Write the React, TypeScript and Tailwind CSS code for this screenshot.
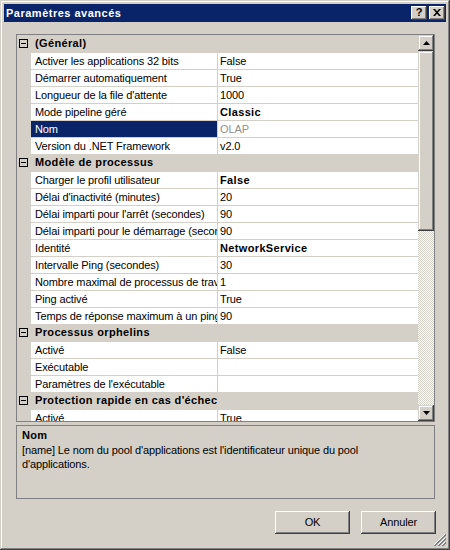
import React from "react";

type Row =
  | { kind: "cat"; label: string }
  | { kind: "prop"; name: string; value: string; bold?: boolean; selected?: boolean };

const rows: Row[] = [
  { kind: "cat", label: "(Général)" },
  { kind: "prop", name: "Activer les applications 32 bits", value: "False" },
  { kind: "prop", name: "Démarrer automatiquement", value: "True" },
  { kind: "prop", name: "Longueur de la file d'attente", value: "1000" },
  { kind: "prop", name: "Mode pipeline géré", value: "Classic", bold: true },
  { kind: "prop", name: "Nom", value: "OLAP", selected: true },
  { kind: "prop", name: "Version du .NET Framework", value: "v2.0" },
  { kind: "cat", label: "Modèle de processus" },
  { kind: "prop", name: "Charger le profil utilisateur", value: "False", bold: true },
  { kind: "prop", name: "Délai d'inactivité (minutes)", value: "20" },
  { kind: "prop", name: "Délai imparti pour l'arrêt (secondes)", value: "90" },
  { kind: "prop", name: "Délai imparti pour le démarrage (secondes)", value: "90" },
  { kind: "prop", name: "Identité", value: "NetworkService", bold: true },
  { kind: "prop", name: "Intervalle Ping (secondes)", value: "30" },
  { kind: "prop", name: "Nombre maximal de processus de travail", value: "1" },
  { kind: "prop", name: "Ping activé", value: "True" },
  { kind: "prop", name: "Temps de réponse maximum à un ping (secondes)", value: "90" },
  { kind: "cat", label: "Processus orphelins" },
  { kind: "prop", name: "Activé", value: "False" },
  { kind: "prop", name: "Exécutable", value: "" },
  { kind: "prop", name: "Paramètres de l'exécutable", value: "" },
  { kind: "cat", label: "Protection rapide en cas d'échec" },
  { kind: "prop", name: "Activé", value: "True" },
];

function MinusBox() {
  return (
    <div className="w-[9px] h-[9px] border border-[#000] flex items-center justify-center">
      <div className="w-[5px] h-px bg-black" />
    </div>
  );
}

function GridRow({ row }: { row: Row }) {
  if (row.kind === "cat") {
    return (
      <div className="flex h-[17px] bg-[#d4d0c8] shrink-0">
        <div className="w-[14px] h-[17px] flex items-center pl-[2px] shrink-0">
          <MinusBox />
        </div>
        <div className="pl-[4px] h-[17px] leading-[17px] font-bold tracking-[0.35px] whitespace-nowrap text-black">
          {row.label}
        </div>
      </div>
    );
  }
  return (
    <div className="flex h-[17px] bg-[#d4d0c8] shrink-0 pt-px">
      <div className="w-[14px] shrink-0" />
      <div
        className={
          row.selected
            ? "w-[186px] h-[16px] shrink-0 bg-[#0a246a] text-white pl-[4px] leading-[16px] whitespace-nowrap overflow-hidden"
            : "w-[186px] h-[16px] shrink-0 bg-white text-black pl-[4px] leading-[16px] whitespace-nowrap overflow-hidden"
        }
      >
        {row.name}
      </div>
      <div className="w-px shrink-0" />
      <div
        className={
          row.selected
            ? "w-[200px] h-[16px] shrink-0 bg-white text-[#8f8f8f] pl-[2px] leading-[16px] whitespace-nowrap overflow-hidden"
            : row.bold
            ? "w-[200px] h-[16px] shrink-0 bg-white text-black font-bold tracking-[0.35px] pl-[2px] leading-[16px] whitespace-nowrap overflow-hidden"
            : "w-[200px] h-[16px] shrink-0 bg-white text-black pl-[2px] leading-[16px] whitespace-nowrap overflow-hidden"
        }
      >
        {row.value}
      </div>
    </div>
  );
}

function Arrow({ up }: { up: boolean }) {
  return (
    <svg width="7" height="4" viewBox="0 0 7 4">
      {up ? <path d="M3.5 0 L7 4 L0 4 Z" fill="#000" /> : <path d="M0 0 L7 0 L3.5 4 Z" fill="#000" />}
    </svg>
  );
}

const raisedSb =
  "bg-[#d4d0c8] shadow-[inset_-1px_-1px_0_#404040,inset_1px_1px_0_#d4d0c8,inset_-2px_-2px_0_#808080,inset_2px_2px_0_#ffffff]";
const raisedBtn =
  "bg-[#d4d0c8] shadow-[inset_-1px_-1px_0_#404040,inset_1px_1px_0_#ffffff,inset_-2px_-2px_0_#808080,inset_2px_2px_0_#d4d0c8]";

function ScrollBar() {
  return (
    <div className="w-[16px] h-[386px] flex flex-col shrink-0">
      <div className={`h-[16px] flex items-center justify-center shrink-0 ${raisedSb}`}>
        <Arrow up />
      </div>
      <div className={`h-[180px] shrink-0 ${raisedSb}`} />
      <div className="flex-1 bg-[repeating-conic-gradient(#d4d0c8_0_25%,#ffffff_0_50%)] bg-[length:2px_2px]" />
      <div className={`h-[16px] flex items-center justify-center shrink-0 ${raisedSb}`}>
        <Arrow up={false} />
      </div>
    </div>
  );
}

function TitleButton({ children }: { children: React.ReactNode }) {
  return (
    <div className={`w-[16px] h-[14px] flex items-center justify-center ${raisedBtn}`}>{children}</div>
  );
}

export default function App() {
  return (
    <div className="w-[450px] h-[550px] relative bg-[#d4d0c8] font-['Liberation_Sans',Arial,sans-serif] text-[11px] tracking-[-0.12px] text-black shadow-[inset_-1px_-1px_0_#404040,inset_1px_1px_0_#d4d0c8,inset_-2px_-2px_0_#808080,inset_2px_2px_0_#ffffff] p-[4px] flex flex-col">
      {/* Title bar */}
      <div className="h-[18px] bg-[#0a246a] flex items-center shrink-0 pl-[2px] pr-[1px]">
        <div className="flex-1 text-white font-bold text-[11px] tracking-[0.5px] leading-[18px] whitespace-nowrap">
          Paramètres avancés
        </div>
        <div className="flex gap-[2px] mb-[1px]">
          <TitleButton>
            <span className="font-bold text-[11px] leading-[11px] text-black">?</span>
          </TitleButton>
          <TitleButton>
            <svg width="8" height="7" viewBox="0 0 8 7">
              <path d="M0 0h2l2 2.2L6 0h2L5 3.5 8 7H6L4 4.8 2 7H0l3-3.5z" fill="#000" />
            </svg>
          </TitleButton>
        </div>
      </div>

      {/* Body */}
      <div className="flex-1 flex flex-col pl-[12px] pr-[11px] pt-[12px]">
        <div className="h-[388px] border border-[#808080] flex shrink-0">
          <div className="w-[401px] h-[386px] overflow-hidden flex flex-col">
            {rows.map((r, i) => (
              <GridRow key={i} row={r} />
            ))}
          </div>
          <ScrollBar />
        </div>

        <div className="mt-[3px] h-[74px] border border-[#808080] pl-[5px] pt-[2px] shrink-0">
          <div className="font-bold tracking-[0.35px] leading-[14px]">Nom</div>
          <div className="mt-[1px] leading-[14px] w-[360px]">
            [name] Le nom du pool d'applications est l'identificateur unique du pool d'applications.
          </div>
        </div>

        <div className="mt-[12px] flex justify-end gap-[11px] -mr-px">
          <div className={`w-[75px] h-[23px] flex items-center justify-center ${raisedBtn}`}>OK</div>
          <div className={`w-[75px] h-[23px] flex items-center justify-center ${raisedBtn}`}>Annuler</div>
        </div>
      </div>

      {/* Resize grip */}
      <svg className="absolute right-[4px] bottom-[4px]" width="12" height="12" viewBox="0 0 12 12">
        <path d="M11 0 L0 11" stroke="#ffffff" strokeWidth="1" />
        <path d="M12 0 L0 12 M12 1 L1 12" stroke="#808080" strokeWidth="1" />
        <path d="M11 4 L4 11" stroke="#ffffff" strokeWidth="1" />
        <path d="M12 4 L4 12 M12 5 L5 12" stroke="#808080" strokeWidth="1" />
        <path d="M11 8 L8 11" stroke="#ffffff" strokeWidth="1" />
        <path d="M12 8 L8 12 M12 9 L9 12" stroke="#808080" strokeWidth="1" />
      </svg>
    </div>
  );
}
